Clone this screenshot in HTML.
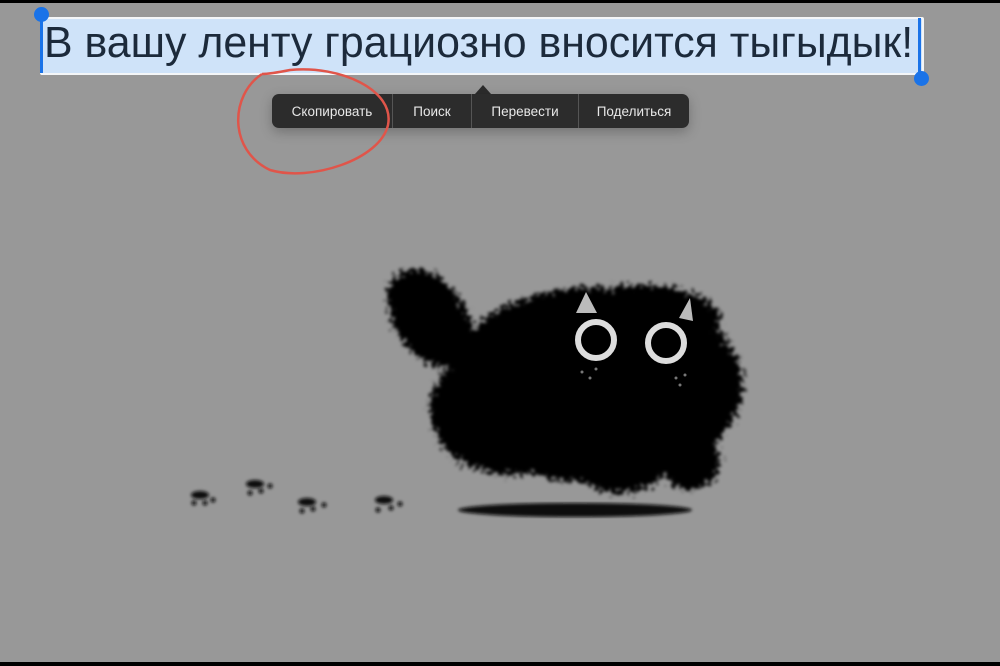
<!DOCTYPE html>
<html><head><meta charset="utf-8"><style>
html,body{margin:0;padding:0}
body{width:1000px;height:666px;background:#989898;position:relative;overflow:hidden;font-family:"Liberation Sans",sans-serif}
.bar{position:absolute;left:0;width:1000px;background:#000}
.sel{position:absolute;left:40px;top:17px;width:880px;height:54px;background:#cfe3f9;border:2px solid #f4f6f8;border-radius:2px}
.txt{position:absolute;left:44px;top:18px;font-size:44px;color:#1c2a3b;white-space:nowrap;line-height:50px;transform:scaleX(0.974);transform-origin:0 0}
.menu{position:absolute;left:272px;top:94px;width:417px;height:34px;background:#2c2c2c;border-radius:7px;display:flex;color:#e8e8e8;font-size:13.5px;box-shadow:0 4px 12px rgba(0,0,0,.25)}
.menu div{display:flex;align-items:center;justify-content:center;border-right:1px solid #555}
.menu div:last-child{border-right:none}
</style></head><body>
<div class="bar" style="top:0;height:3px"></div>
<div class="bar" style="top:662px;height:4px"></div>
<div class="sel"></div>
<div class="txt">В вашу ленту грациозно вносится тыгыдык!</div>
<div style="position:absolute;left:40px;top:16px;width:3px;height:57px;background:#1a73e8"></div>
<div style="position:absolute;left:34px;top:7px;width:15px;height:15px;border-radius:50%;background:#1a73e8"></div>
<div style="position:absolute;left:918px;top:18px;width:3px;height:58px;background:#1a73e8"></div>
<div style="position:absolute;left:914px;top:71px;width:15px;height:15px;border-radius:50%;background:#1a73e8"></div>
<div style="position:absolute;left:475px;top:85px;width:0;height:0;border-left:8px solid transparent;border-right:8px solid transparent;border-bottom:9px solid #2c2c2c"></div>
<div class="menu">
<div style="width:120px">Скопировать</div>
<div style="width:78px">Поиск</div>
<div style="width:106px">Перевести</div>
<div style="flex:1">Поделиться</div>
</div>
<svg width="1000" height="666" style="position:absolute;left:0;top:0">
<defs>
<filter id="f" x="-20%" y="-20%" width="140%" height="140%">
<feTurbulence type="fractalNoise" baseFrequency="0.25" numOctaves="2" seed="3"/>
<feDisplacementMap in="SourceGraphic" scale="22" xChannelSelector="R" yChannelSelector="G"/>
<feGaussianBlur stdDeviation="1.5"/>
</filter>
<filter id="s"><feGaussianBlur stdDeviation="1.5"/></filter></defs>
<path d="M262 74 C230 95 228 150 270 170 C310 182 380 160 388 125 C395 90 340 65 290 70 C280 72 270 74 262 74" fill="none" stroke="#e0554a" stroke-width="2.5"/>
<g filter="url(#f)" fill="#050505">
<ellipse cx="595" cy="385" rx="148" ry="98"/>
<ellipse cx="430" cy="318" rx="36" ry="54" transform="rotate(-35 430 318)"/>
<ellipse cx="510" cy="410" rx="80" ry="65"/>
<ellipse cx="620" cy="465" rx="45" ry="28"/>
<ellipse cx="690" cy="460" rx="30" ry="30"/>
<ellipse cx="640" cy="320" rx="80" ry="35"/>
</g>
<polygon points="576,313 586,292 597,313" fill="#bbb"/>
<polygon points="679,318 690,298 693,321" fill="#bbb"/>
<circle cx="596" cy="340" r="18" fill="none" stroke="#ddd" stroke-width="6"/>
<circle cx="666" cy="343" r="18" fill="none" stroke="#ddd" stroke-width="6"/>
<g fill="#777"><circle cx="582" cy="372" r="1.5"/><circle cx="590" cy="378" r="1.5"/><circle cx="596" cy="369" r="1.5"/><circle cx="676" cy="378" r="1.5"/><circle cx="685" cy="375" r="1.5"/><circle cx="680" cy="385" r="1.5"/></g>
<ellipse cx="575" cy="510" rx="117" ry="7" fill="#080808" filter="url(#s)"/>
<g fill="#111" filter="url(#s)">
<ellipse cx="200" cy="495" rx="9" ry="4"/><circle cx="194" cy="503" r="2.5"/><circle cx="205" cy="503" r="2.5"/><circle cx="213" cy="500" r="2.5"/>
<ellipse cx="255" cy="484" rx="9" ry="4"/><circle cx="250" cy="493" r="2.5"/><circle cx="261" cy="491" r="2.5"/><circle cx="270" cy="486" r="2.5"/>
<ellipse cx="307" cy="502" rx="9" ry="4"/><circle cx="302" cy="511" r="2.5"/><circle cx="313" cy="509" r="2.5"/><circle cx="324" cy="505" r="2.5"/>
<ellipse cx="384" cy="500" rx="9" ry="4"/><circle cx="378" cy="510" r="2.5"/><circle cx="391" cy="508" r="2.5"/><circle cx="400" cy="504" r="2.5"/>
</g>
</svg>
</body></html>
